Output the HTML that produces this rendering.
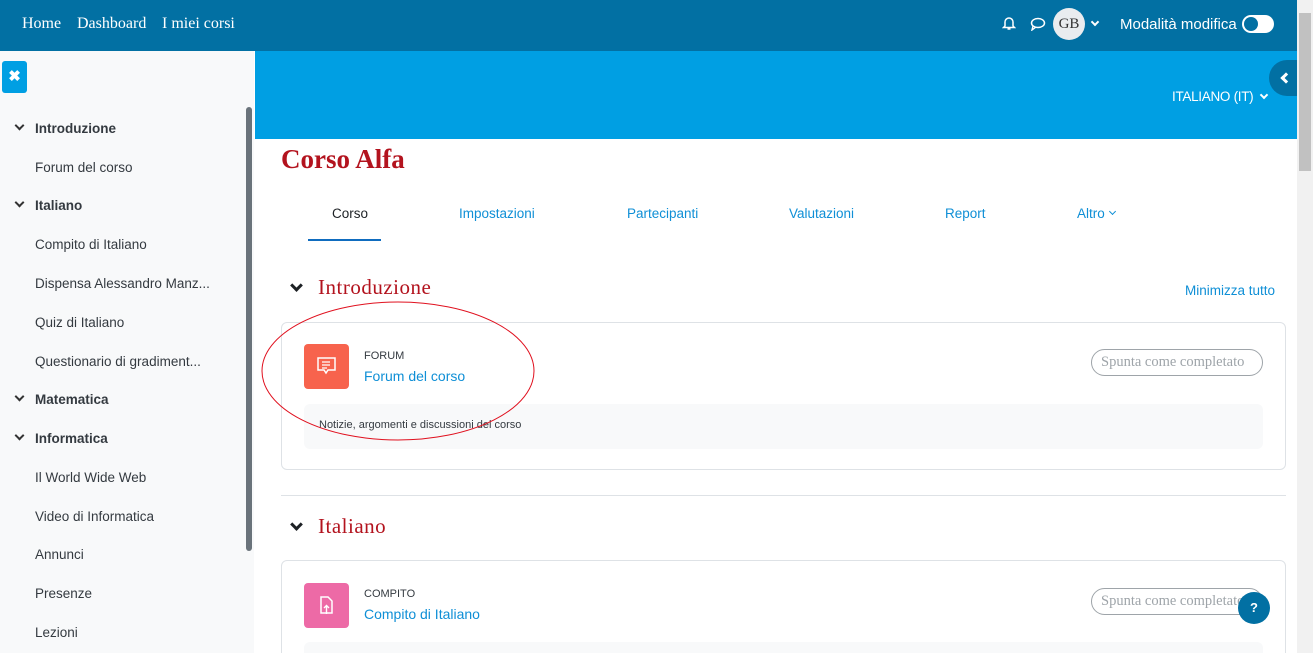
<!DOCTYPE html>
<html><head><meta charset="utf-8"><style>
*{box-sizing:border-box;margin:0;padding:0}
html,body{width:1313px;height:653px;overflow:hidden}
body{font-family:"Liberation Sans",sans-serif;background:#fff;position:relative}
.abs{position:absolute}
.nav{left:0;top:0;width:1297px;height:51px;background:#0270a3}
.nav .l{position:absolute;top:15px;font-family:"Liberation Serif",serif;color:#fff;font-size:16px}
.side{left:0;top:51px;width:254px;height:602px;background:#f8f9fa}
.side .it{position:absolute;left:35px;font-size:13.5px;color:#343a40}
.side .h{font-weight:bold;color:#343a40}
.chev{position:absolute;left:16px;width:7px;height:7px;border-right:2px solid #333;border-bottom:2px solid #333;transform:rotate(45deg)}
.band{left:255px;top:51px;width:1042px;height:88px;background:#009fe3}
.tab{position:absolute;top:206px;font-size:13.5px;color:#0f8fd6}
.card{position:absolute;left:281px;width:1005px;border:1px solid #dee2e6;border-radius:6px;background:#fff}
.btn{position:absolute;left:1091px;width:172px;height:27px;border:1px solid #9ea4a9;border-radius:14px;font-family:"Liberation Serif",serif;font-size:14.5px;color:#9ea4a9;padding:4px 0 0 9px;white-space:nowrap;overflow:hidden}
.sec{position:absolute;left:318px;font-family:"Liberation Serif",serif;font-size:21px;color:#b3131e;letter-spacing:0.5px}
.schev{position:absolute;left:292px;width:9px;height:9px;border-right:3px solid #1d2125;border-bottom:3px solid #1d2125;transform:rotate(45deg)}
</style></head><body>
<div class="abs nav">
<span class="l" style="left:22px">Home</span><span class="l" style="left:77px">Dashboard</span><span class="l" style="left:162px">I miei corsi</span>
<svg class="abs" style="left:1002px;top:15px" width="14" height="16" viewBox="0 0 14 16"><path d="M3 11V7a4 4 0 0 1 8 0v4l1.5 1.5h-11z M5.5 14h3" fill="none" stroke="#fff" stroke-width="1.5"/></svg>
<svg class="abs" style="left:1030px;top:17px" width="16" height="14" viewBox="0 0 16 14"><ellipse cx="8" cy="6" rx="6.5" ry="4.5" fill="none" stroke="#fff" stroke-width="1.5"/><path d="M3 9 L2 13 L6 10" fill="none" stroke="#fff" stroke-width="1.4"/></svg>
<div class="abs" style="left:1053px;top:8px;width:32px;height:32px;border-radius:50%;background:#e9ecef;font-family:'Liberation Serif',serif;font-size:15px;color:#333;text-align:center;line-height:32px">GB</div>
<div class="abs" style="left:1092px;top:19px;width:6px;height:6px;border-right:2px solid #fff;border-bottom:2px solid #fff;transform:rotate(45deg)"></div>
<span class="abs" style="left:1120px;top:16px;color:#fff;font-size:15px">Modalità modifica</span>
<div class="abs" style="left:1242px;top:15px;width:32px;height:18px;border-radius:9px;background:#fff"></div>
<div class="abs" style="left:1244px;top:17px;width:14px;height:14px;border-radius:50%;background:#0270a3"></div>
</div>
<div class="abs side">
<div class="abs" style="left:2px;top:10px;width:25px;height:32px;border-radius:3px;background:#009fe3;color:#fff;font-size:15px;font-weight:bold;text-align:center;line-height:31px">✖</div>
<div class="abs" style="left:246px;top:56px;width:6px;height:444px;border-radius:3px;background:#6a737b"></div>
<div class="chev" style="top:71px"></div><span class="it h" style="top:70px">Introduzione</span>
<span class="it" style="top:109px">Forum del corso</span>
<div class="chev" style="top:148px"></div><span class="it h" style="top:147px">Italiano</span>
<span class="it" style="top:186px">Compito di Italiano</span>
<span class="it" style="top:225px">Dispensa Alessandro Manz...</span>
<span class="it" style="top:264px">Quiz di Italiano</span>
<span class="it" style="top:303px">Questionario di gradiment...</span>
<div class="chev" style="top:342px"></div><span class="it h" style="top:341px">Matematica</span>
<div class="chev" style="top:381px"></div><span class="it h" style="top:380px">Informatica</span>
<span class="it" style="top:419px">Il World Wide Web</span>
<span class="it" style="top:458px">Video di Informatica</span>
<span class="it" style="top:496px">Annunci</span>
<span class="it" style="top:535px">Presenze</span>
<span class="it" style="top:574px">Lezioni</span>
</div>
<div class="abs band"></div>
<div class="abs" style="left:1269px;top:60px;width:30px;height:36px;border-radius:18px 0 0 18px;background:#0270a3"></div>
<div class="abs" style="left:1282px;top:74px;width:8px;height:8px;border-left:3px solid #fff;border-bottom:3px solid #fff;transform:rotate(45deg)"></div>
<span class="abs" style="left:1172px;top:89px;color:#fff;font-size:13.5px;letter-spacing:-0.3px">ITALIANO (IT)</span>
<div class="abs" style="left:1261px;top:92px;width:6px;height:6px;border-right:2px solid #fff;border-bottom:2px solid #fff;transform:rotate(45deg)"></div>
<div class="abs" style="left:1297px;top:0;width:16px;height:653px;background:#f1f1f1"></div>
<div class="abs" style="left:1299px;top:13px;width:12px;height:158px;background:#c1c1c1"></div>
<span class="abs" style="left:281px;top:144px;font-family:'Liberation Serif',serif;font-weight:bold;font-size:27px;color:#b3131e">Corso Alfa</span>
<span class="tab" style="left:332px;color:#1d2125">Corso</span>
<div class="abs" style="left:308px;top:239px;width:73px;height:2px;background:#0f6cbf"></div>
<span class="tab" style="left:459px">Impostazioni</span>
<span class="tab" style="left:627px">Partecipanti</span>
<span class="tab" style="left:789px">Valutazioni</span>
<span class="tab" style="left:945px">Report</span>
<span class="tab" style="left:1077px">Altro</span>
<div class="abs" style="left:1110px;top:209px;width:5px;height:5px;border-right:1.5px solid #0f8fd6;border-bottom:1.5px solid #0f8fd6;transform:rotate(45deg)"></div>
<div class="schev" style="top:281px"></div><span class="sec" style="top:275px">Introduzione</span>
<span class="abs" style="left:1185px;top:283px;font-size:13.5px;color:#0f8fd6">Minimizza tutto</span>
<div class="card" style="top:322px;height:148px"></div>
<div class="abs" style="left:304px;top:344px;width:45px;height:45px;border-radius:4px;background:#f7634d"></div>
<svg class="abs" style="left:314px;top:354px" width="25" height="25" viewBox="0 0 25 25"><path d="M4 4h17v12h-7l-2 3-2-3H4z" fill="none" stroke="#fff" stroke-width="1.5"/><path d="M8 8h8M8 11h8M8 14h5" stroke="#fff" stroke-width="1.3"/></svg>
<span class="abs" style="left:364px;top:350px;font-size:11px;color:#343a40">FORUM</span>
<span class="abs" style="left:364px;top:368px;font-size:14px;color:#0f8fd6">Forum del corso</span>
<div class="btn" style="top:349px">Spunta come completato</div>
<div class="abs" style="left:304px;top:404px;width:959px;height:45px;border-radius:6px;background:#f8f9fa"></div>
<span class="abs" style="left:319px;top:419px;font-size:11px;color:#343a40">Notizie, argomenti e discussioni del corso</span>
<svg class="abs" style="left:0;top:0" width="1313" height="653"><ellipse cx="398" cy="371" rx="136" ry="69" fill="none" stroke="#e0101e" stroke-width="1"/></svg>
<div class="abs" style="left:281px;top:495px;width:1005px;height:1px;background:#dee2e6"></div>
<div class="schev" style="top:520px"></div><span class="sec" style="top:514px">Italiano</span>
<div class="card" style="top:560px;height:110px"></div>
<div class="abs" style="left:304px;top:583px;width:45px;height:45px;border-radius:4px;background:#ed6aa6"></div>
<svg class="abs" style="left:314px;top:593px" width="25" height="25" viewBox="0 0 25 25"><path d="M7 4h7l4 4v12H7z" fill="none" stroke="#fff" stroke-width="1.5"/><path d="M12.5 21v-8M10 15l2.5-2.5L15 15" fill="none" stroke="#fff" stroke-width="1.4"/></svg>
<span class="abs" style="left:364px;top:588px;font-size:11px;color:#343a40">COMPITO</span>
<span class="abs" style="left:364px;top:606px;font-size:14px;color:#0f8fd6">Compito di Italiano</span>
<div class="btn" style="top:588px">Spunta come completato</div>
<div class="abs" style="left:304px;top:642px;width:959px;height:20px;border-radius:6px;background:#f8f9fa"></div>
<div class="abs" style="left:1238px;top:592px;width:32px;height:32px;border-radius:50%;background:#0270a3;color:#fff;font-weight:bold;font-size:13px;text-align:center;line-height:32px">?</div>
</body></html>
